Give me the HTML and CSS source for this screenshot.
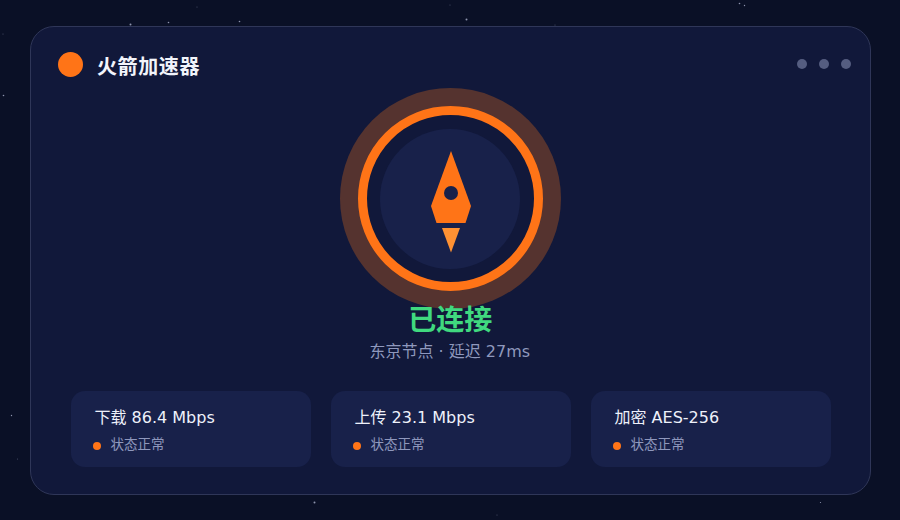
FILE: index.html
```html
<!DOCTYPE html>
<html>
  <head>
    <meta charset="utf-8">
    <link rel="stylesheet" href="styles.css">
    <title>火箭加速器</title>
  </head>
  <body>
    <!-- Stars behind the card -->
    <svg class="stars" width="900" height="520" viewBox="0 0 900 520">
      <g fill="#8d93ad">
        <circle cx="130.5" cy="24.500" r="1"/>
        <circle cx="168.500" cy="22.500" r="0.8"/>
        <circle cx="239.500" cy="21.500" r="0.8"/>
        <circle cx="466.500" cy="19.500" r="1"/>
        <circle cx="739.500" cy="3.500" r="0.8"/>
        <circle cx="744.500" cy="5.500" r="0.7"/>
        <circle cx="3.500" cy="95.500" r="0.8"/>
        <circle cx="314.500" cy="502.500" r="1"/>
        <circle cx="11.500" cy="415.500" r="0.7"/>
        <circle cx="820.500" cy="502.500" r="0.6"/>
      </g>
      <g fill="#4a4f6a">
        <circle cx="197" cy="7" r="0.6"/>
        <circle cx="555" cy="25" r="0.6"/>
        <circle cx="450" cy="5" r="0.6"/>
        <circle cx="497" cy="515" r="0.6"/>
        <circle cx="17.500" cy="459" r="0.6"/>
        <circle cx="3" cy="34" r="0.6"/>
      </g>
    </svg>

    <main class="card">
      <header class="top">
        <div class="brand">
          <span class="logo"></span>
          <h1>火箭加速器</h1>
        </div>
        <div class="dots">
          <span></span>
          <span></span>
          <span></span>
        </div>
      </header>

      <section class="status">
        <div class="halo">
          <div class="ring">
            <div class="core">
              <svg class="rocket" width="40" height="102" viewBox="0 0 40 102">
                <path d="M20 0 L40 55 L34.500 72 L5.500 72 L0 55 Z" fill="#ff7417"/>
                <circle cx="20" cy="42" r="7" fill="#18214a"/>
                <path d="M11 77 L29 77 L20 101.500 Z" fill="#ff9233"/>
              </svg>
            </div>
          </div>
        </div>
        <h2>已连接</h2>
        <p>东京节点 · 延迟 27ms</p>
      </section>

      <section class="stats">
        <div class="stat">
          <div class="value">下载 86.4 Mbps</div>
          <div class="state"><span class="dot"></span>状态正常</div>
        </div>
        <div class="stat">
          <div class="value">上传 23.1 Mbps</div>
          <div class="state"><span class="dot"></span>状态正常</div>
        </div>
        <div class="stat">
          <div class="value">加密 AES-256</div>
          <div class="state"><span class="dot"></span>状态正常</div>
        </div>
      </section>
    </main>
  </body>
</html>
```

FILE: styles.css
```css
* {
  box-sizing: border-box;
}
html,
body {
  margin: 0;
  height: 100%;
}
body {
  position: relative;
  width: 900px;
  height: 520px;
  overflow: hidden;
  padding: 26px 29px 25px 30px;
  background: #0a1026;
  font-family: "DejaVu Sans", "Noto Sans CJK SC", sans-serif;
}
h1,
h2,
p {
  margin: 0;
}
.stars {
  position: absolute;
  left: 0;
  top: 0;
}
.card {
  position: relative;
  display: flex;
  flex-direction: column;
  height: 469px;
  padding: 23px 19px 27px 27px;
  background: #11183a;
  border: 1px solid #2f3658;
  border-radius: 24px;
}

/* Header */
.top {
  display: flex;
  justify-content: space-between;
  align-items: flex-start;
}
.brand {
  display: flex;
  align-items: flex-start;
  gap: 14px;
}
.logo {
  width: 25px;
  height: 25px;
  margin-top: 2px;
  border-radius: 50%;
  background: #ff7417;
}
h1 {
  margin-top: 2px;
  font-size: 20px;
  font-weight: 700;
  letter-spacing: 0.6px;
  line-height: 30px;
  color: #f2f4fb;
}
.dots {
  display: flex;
  gap: 12px;
  padding-top: 9px;
}
.dots span {
  width: 10px;
  height: 10px;
  border-radius: 50%;
  background: #555d80;
}

/* Centre status */
.status {
  display: flex;
  flex-direction: column;
  align-items: center;
  margin-top: 6px;
  margin-right: 8.5px;
}
.halo {
  display: flex;
  align-items: center;
  justify-content: center;
  width: 221px;
  height: 221px;
  border-radius: 50%;
  background: #55332f;
}
.ring {
  display: flex;
  align-items: center;
  justify-content: center;
  width: 185px;
  height: 185px;
  border: 9px solid #ff7417;
  border-radius: 50%;
  background: #11183a;
}
.core {
  display: flex;
  align-items: center;
  justify-content: center;
  width: 140px;
  height: 140px;
  border-radius: 50%;
  background: #18214a;
}
.rocket {
  margin-top: 6px;
  margin-left: 1px;
}
h2 {
  margin-top: -6px;
  font-size: 28px;
  font-weight: 700;
  line-height: 36px;
  color: #40d97f;
}
.status p {
  margin-top: 1px;
  margin-right: 1px;
  font-size: 16px;
  line-height: 24px;
  color: #8f98bd;
}

/* Stat cards */
.stats {
  display: flex;
  gap: 20px;
  margin-top: auto;
  padding-left: 13px;
}
.stat {
  width: 240px;
  height: 76px;
  padding: 15px 23.5px;
  background: #18214a;
  border-radius: 14px;
}
.value {
  font-size: 16px;
  line-height: 24px;
  color: #eef1fa;
}
.state {
  display: flex;
  align-items: center;
  gap: 10px;
  margin-top: 4px;
  margin-left: -2px;
  font-size: 13.5px;
  line-height: 20px;
  color: #8f98bd;
}
.dot {
  width: 8px;
  height: 8px;
  margin-top: 3px;
  border-radius: 50%;
  background: #ff7417;
}
```
